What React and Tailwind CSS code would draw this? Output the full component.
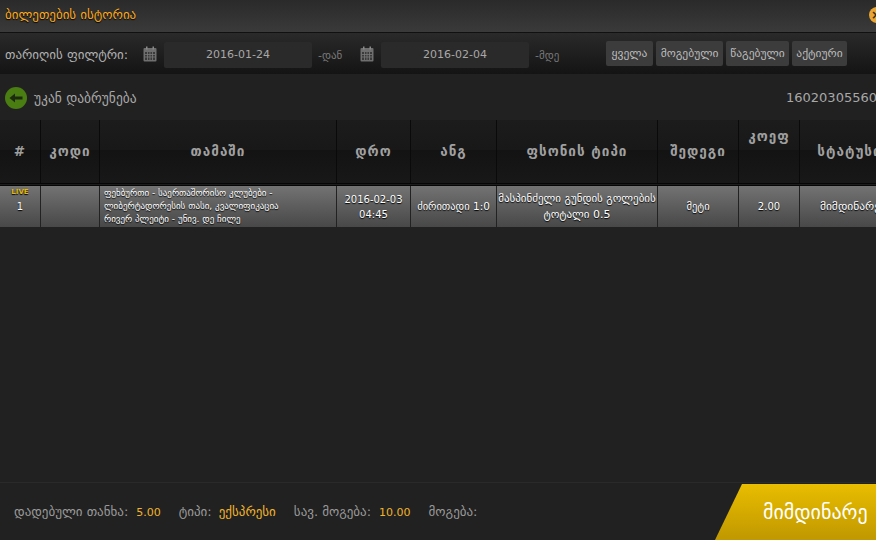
import React from 'react'

const geo = "font-['DejaVu_Sans','Noto_Sans',sans-serif]"
const num = "font-['DejaVu_Sans',sans-serif]"

const columns = 'grid grid-cols-[41px_59px_237px_74px_86px_161px_81px_61px_100px] w-[900px]'
const rowShadow = '[text-shadow:0_1px_1px_#000]'

const headers = [
  { label: '#', className: '' },
  { label: 'კოდი', className: '' },
  { label: 'თამაში', className: '' },
  { label: 'დრო', className: '' },
  { label: 'ანგ', className: '' },
  { label: 'ფსონის ტიპი', className: '' },
  { label: 'შედეგი', className: '' },
  { label: 'კოეფ', className: 'pb-[31px]' },
  { label: 'სტატუსი', className: '' },
]

const CalendarIcon = () => (
  <svg width="14" height="16" viewBox="0 0 14 16" className="shrink-0 -mt-[2px]">
    <rect x="0.5" y="2" width="13" height="13.5" rx="1" fill="#6f6f6f" />
    <rect x="3" y="0.5" width="1.5" height="3" fill="#8a8a8a" />
    <rect x="9.5" y="0.5" width="1.5" height="3" fill="#8a8a8a" />
    <rect x="2" y="6" width="10" height="8" fill="#3a3a3a" />
    <path d="M2 8.5h10M2 11h10M4.5 6v8M7 6v8M9.5 6v8" stroke="#7a7a7a" strokeWidth="0.8" />
  </svg>
)

const BackIcon = () => (
  <svg width="22" height="22" viewBox="0 0 22 22" className="shrink-0">
    <circle cx="11" cy="11" r="11" fill="#4a7d12" />
    <path d="M4.5 11 10 6.5V9.5h7.5v3H10v3z" fill="#1c2a10" />
  </svg>
)

const DateField = ({ value, suffix }) => (
  <div className="flex items-center">
    <CalendarIcon />
    <div className={`${num} ml-[7px] w-[148px] h-[26px] rounded-[2px] bg-[#2a2a2a] text-[#a8a8a8] text-[11px] flex items-center justify-center`}>
      {value}
    </div>
    <span className={`${geo} w-[48px] pl-[6px] pt-[3px] text-[11px] text-[#7a7a7a]`}>{suffix}</span>
  </div>
)

const FilterButton = ({ label, width }) => (
  <button className={`${geo} ${width} h-[25px] rounded-[2px] bg-[#3c3c3c] text-[#bdbdbd] text-[11.5px] flex items-center justify-center`}>
    {label}
  </button>
)

const App = () => {
  return (
    <div className={`${geo} relative w-[876px] h-[540px] overflow-hidden bg-[#212121] flex flex-col`}>
      {/* Title bar */}
      <div className="h-[32px] shrink-0 px-[5px] pb-[3px] flex items-center justify-between bg-gradient-to-b from-[#2a2a2a] to-[#3a3a3a]">
        <span className="text-[13px] text-[#fbaa1e] [text-shadow:0_1px_1px_#000]">ბილეთების ისტორია</span>
        <span className="absolute left-[869px] top-[7px] w-[16px] h-[16px] rounded-full bg-[#e9a534] text-[#3a2a10] text-[12px] font-bold leading-[16px] pl-[2px]">×</span>
      </div>

      {/* Filter bar */}
      <div className="h-[42px] shrink-0 border-t border-t-[#111] pl-[5px] pt-[3px] flex items-center bg-gradient-to-b from-[#2a2a2a] to-[#141414]">
        <span className="w-[138px] text-[13px] text-[#b0b0b0]">თარიღის ფილტრი:</span>
        <DateField value="2016-01-24" suffix="-დან" />
        <DateField value="2016-02-04" suffix="-მდე" />
        <div className="ml-[29px] -mt-[3px] flex gap-[3px]">
          <FilterButton label="ყველა" width="w-[47px]" />
          <FilterButton label="მოგებული" width="w-[67px]" />
          <FilterButton label="წაგებული" width="w-[63px]" />
          <FilterButton label="აქტიური" width="w-[55px]" />
        </div>
      </div>

      {/* Back row */}
      <div className="h-[46px] shrink-0 pl-[5px] pt-[2px] flex items-center">
        <BackIcon />
        <span className="ml-[7px] text-[13.5px] text-[#a8a8a8]">უკან დაბრუნება</span>
        <span className={`${num} absolute left-[786px] text-[13px] text-[#a8a8a8]`}>160203055603</span>
      </div>

      {/* Table */}
      <div className={`${columns} h-[66px] shrink-0 bg-[linear-gradient(to_bottom,#1c1c1c_0%,#181818_48%,#131313_48%,#181818_100%)] border-b-[3px] border-double border-b-[#060606]`}>
        {headers.map((h) => (
          <div
            key={h.label}
            className={`${h.className} flex items-center justify-center border-r border-r-[#0a0a0a] text-[13.5px] font-bold text-[#a0a0a0] tracking-[1px]`}
          >
            {h.label}
          </div>
        ))}
      </div>
      <div className={`${columns} ${rowShadow} h-[41px] shrink-0 text-white bg-gradient-to-b from-[#737373] to-[#484848]`}>
        <div className="relative flex items-center justify-center border-r border-r-[#222]">
          <span className={`${num} absolute top-[1px] text-[7px] font-bold text-[#e4b90c]`}>LIVE</span>
          <span className={`${num} text-[10px]`}>1</span>
        </div>
        <div className="border-r border-r-[#222]" />
        <div className="px-[4px] flex items-center border-r border-r-[#222] text-[9px] leading-[13px] whitespace-nowrap">
          <span>
            ფეხბურთი - საერთაშორისო კლუბები -<br />
            ლიბერტადორესის თასი, კვალიფიკაცია<br />
            რივერ პლეიტი - უნივ. დე ჩილე
          </span>
        </div>
        <div className={`${num} flex items-center justify-center text-center border-r border-r-[#222] text-[10px] leading-[15px]`}>
          2016-02-03<br />04:45
        </div>
        <div className="flex items-center justify-center border-r border-r-[#222] text-[10.5px] whitespace-nowrap">
          ძირითადი 1:0
        </div>
        <div className="flex items-center justify-center text-center border-r border-r-[#222] text-[11px] leading-[16px]">
          მასპინძელი გუნდის გოლების ტოტალი 0.5
        </div>
        <div className="flex items-center justify-center border-r border-r-[#222] text-[10.5px]">მეტი</div>
        <div className={`${num} flex items-center justify-center border-r border-r-[#222] text-[10px]`}>2.00</div>
        <div className="flex items-center justify-center text-[11.5px]">მიმდინარე</div>
      </div>

      {/* Footer */}
      <div className="mt-auto h-[58px] shrink-0 border-t border-t-[#2a2a2a] flex items-center pl-[14px] text-[13px] text-[#9a9a9a]">
        <span>დადებული თანხა:</span>
        <span className={`${num} ml-[8px] pt-[3px] text-[11px] text-[#f0b429]`}>5.00</span>
        <span className="ml-[18px]">ტიპი:</span>
        <span className="ml-[7px] text-[#f0b429]">ექსპრესი</span>
        <span className="ml-[18px]">სავ. მოგება:</span>
        <span className={`${num} ml-[8px] pt-[3px] text-[11px] text-[#f0b429]`}>10.00</span>
        <span className="ml-[18px]">მოგება:</span>
        <div className="ml-auto self-end w-[161px] h-[56px] pl-[48px] flex items-center bg-gradient-to-b from-[#e9bd00] to-[#c09800] text-white text-[20px] [clip-path:polygon(27px_0,100%_0,100%_100%,0_100%)]">
          მიმდინარე
        </div>
      </div>
    </div>
  )
}

export default App
